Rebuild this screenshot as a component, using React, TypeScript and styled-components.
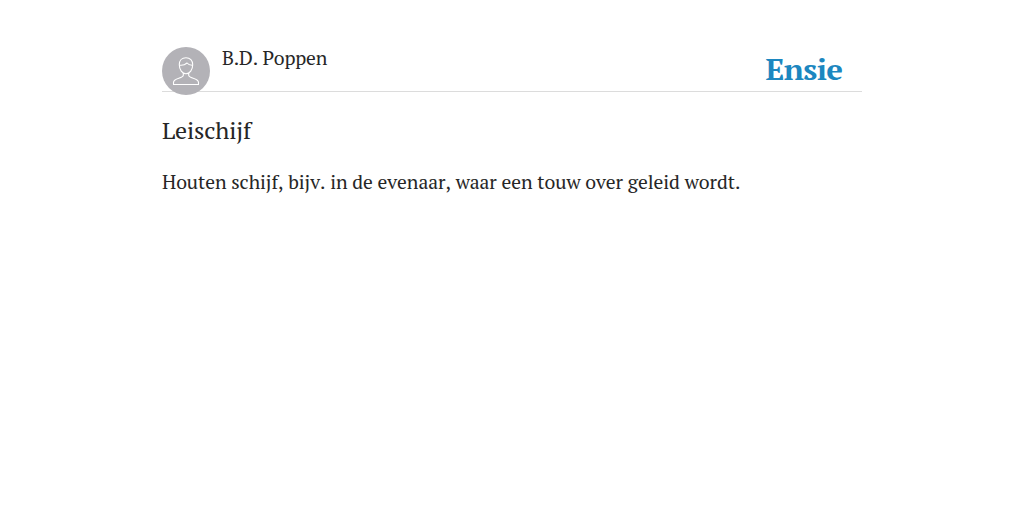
import React from "react";
import styled, { createGlobalStyle } from "styled-components";

const GlobalStyle = createGlobalStyle`
  * { box-sizing: border-box; }
  body {
    margin: 0;
    background: #fff;
    color: #262626;
    font-family: "PT Serif", "Liberation Serif", serif;
    font-kerning: none;
  }
`;

const Page = styled.main`
  width: 700px;
  margin: 0 auto;
  padding-top: 47px;
`;

const Header = styled.header`
  display: flex;
  align-items: flex-start;
  height: 45px;
  border-bottom: 1px solid #dcdcdc;
`;

const Avatar = styled.svg`
  flex: none;
  width: 48px;
  height: 48px;
  margin-right: 12px;
`;

const Author = styled.span`
  font-size: 19.5px;
  line-height: 22px;
  letter-spacing: -0.2px;
  white-space: nowrap;
`;

const Logo = styled.svg`
  flex: none;
  width: 84px;
  height: 40px;
  margin: 2px 16px 0 auto;
  overflow: visible;
  fill: #1c87c0;
  font-family: "PT Serif", "Liberation Serif", serif;
  font-size: 30px;
  font-weight: 700;
  letter-spacing: -0.6px;
`;

const Title = styled.h1`
  margin: 23px 0 0;
  font-size: 24px;
  font-weight: 400;
  line-height: 30px;
  letter-spacing: -0.15px;
`;

const Definition = styled.p`
  margin: 24px 0 0;
  font-size: 19.5px;
  line-height: 26px;
  letter-spacing: -0.06px;
  word-spacing: 0.1px;
  white-space: nowrap;
`;

export default function App() {
  return (
    <>
      <GlobalStyle />
      <Page>
        <Header>
          <Avatar viewBox="0 0 48 48" aria-hidden="true">
            <circle cx="24" cy="24" r="24" fill="#b3b2b7" />
            <g fill="none" stroke="#fff" strokeWidth="1.1" strokeLinejoin="round">
              <path d="M24 10.7c-4.1 0-6.7 2.8-6.7 7 0 4.900 2.900 9.100 6.700 9.100s6.700-4.200 6.700-9.100c0-4.200-2.600-7-6.700-7z" />
              <path d="M17.500 18.200c2.800.4 5.600-.4 7.500-2.200 1.300 1.600 3.200 2.300 5.500 2.200" />
              <path d="M21.300 26v2.300c0 1.500-1.800 2.100-4.500 2.900-3.500 1-5.300 2-5.300 4.300v2h25v-2c0-2.300-1.800-3.300-5.300-4.300-2.700-.8-4.500-1.400-4.500-2.900V26" />
            </g>
          </Avatar>
          <Author>B.D. Poppen</Author>
          <Logo viewBox="0 0 84 40" role="img" aria-label="Ensie">
            <text x="3.500" y="31.300" textLength="77" lengthAdjust="spacingAndGlyphs">
              Ensie
            </text>
          </Logo>
        </Header>
        <Title>Leischijf</Title>
        <Definition>
          Houten schijf, bijv. in de evenaar, waar een touw over geleid wordt.
        </Definition>
      </Page>
    </>
  );
}
